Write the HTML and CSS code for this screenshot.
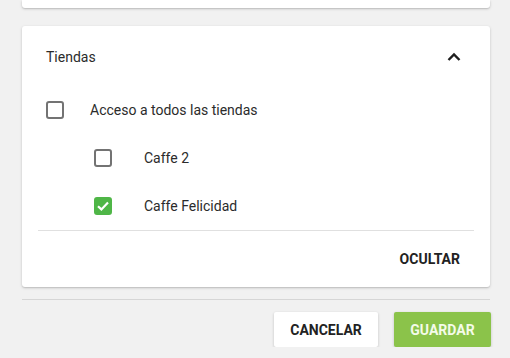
FILE: index.html
```html
<!DOCTYPE html>
<html lang="es">
<head>
  <meta charset="UTF-8">
  <title>Tiendas</title>
  <link rel="stylesheet" href="styles.css">
</head>
<body>
  <div class="page">
    <div class="card card-top"></div>

    <div class="card">
      <div class="card-header">
        <span class="card-title">Tiendas</span>
        <svg class="chevron" width="24" height="24" viewBox="0 0 24 24">
          <polyline points="6.5,15 12,9.5 17.5,15" fill="none" stroke="#1e1e1e" stroke-width="2.4"/>
        </svg>
      </div>

      <label class="check-row">
        <span class="box"></span>
        <span class="check-label">Acceso a todos las tiendas</span>
      </label>
      <label class="check-row sub">
        <span class="box"></span>
        <span class="check-label">Caffe 2</span>
      </label>
      <label class="check-row sub">
        <span class="box checked">
          <svg width="14" height="14" viewBox="0 0 14 14">
            <polyline points="2,7.2 5.4,10.4 12,3.6" fill="none" stroke="#fff" stroke-width="2.2"/>
          </svg>
        </span>
        <span class="check-label">Caffe Felicidad</span>
      </label>

      <div class="card-divider"></div>

      <div class="card-footer">
        <button class="text-btn">OCULTAR</button>
      </div>
    </div>

    <div class="page-divider"></div>

    <div class="actions">
      <button class="btn btn-cancel">CANCELAR</button>
      <button class="btn btn-save">GUARDAR</button>
    </div>
  </div>
</body>
</html>
```

FILE: styles.css
```css
body {
  margin: 0;
  background: #f1f1f1;
  font-family: Roboto, "Liberation Sans", sans-serif;
  color: #2b2b2b;
}

.page {
  padding: 0 20px 0 22px;
}

.card {
  background: #ffffff;
  border-radius: 3px;
  box-shadow: 0 1px 3px rgba(0, 0, 0, 0.18), 0 1px 1px rgba(0, 0, 0, 0.08);
}

.card-top {
  height: 8px;
  border-radius: 0 0 3px 3px;
  margin-bottom: 18px;
}

.card-header {
  height: 60px;
  padding: 0 24px;
  display: flex;
  align-items: center;
  justify-content: space-between;
}

.card-title {
  font-size: 14px;
  margin-top: 2px;
}

.chevron {
  margin-top: 2px;
}

.check-row {
  height: 48px;
  padding-left: 24px;
  display: flex;
  align-items: center;
  font-size: 14px;
}

.check-row .box {
  margin-right: 26px;
}

.check-row.sub {
  padding-left: 72px;
}

.check-row.sub .box {
  margin-right: 32px;
}

.box {
  width: 18px;
  height: 18px;
  box-sizing: border-box;
  border: 2px solid #737373;
  border-radius: 3px;
  display: flex;
  align-items: center;
  justify-content: center;
  flex-shrink: 0;
}

.box.checked {
  background: #4fb647;
  border-color: #4fb647;
}

.card-divider {
  height: 1px;
  background: #e0e0e0;
  margin: 0 16px;
}

.card-footer {
  height: 56px;
  display: flex;
  align-items: center;
  justify-content: flex-end;
  padding-right: 30px;
}

.text-btn {
  border: none;
  background: none;
  padding: 0;
  font-family: inherit;
  font-size: 14px;
  font-weight: bold;
  color: #222;
}

.page-divider {
  height: 1px;
  background: #d6d6d6;
  margin-top: 12px;
}

.actions {
  display: flex;
  justify-content: flex-end;
  gap: 16px;
  margin-top: 12px;
  margin-right: -1px;
}

.btn {
  height: 35px;
  border: none;
  border-radius: 2px;
  font-family: inherit;
  font-size: 14px;
  font-weight: bold;
  box-shadow: 0 1px 3px rgba(0, 0, 0, 0.2);
}

.btn-cancel {
  width: 104px;
  background: #ffffff;
  color: #222;
}

.btn-save {
  width: 97px;
  background: #8bc34a;
  color: #f4fbe9;
}
```
